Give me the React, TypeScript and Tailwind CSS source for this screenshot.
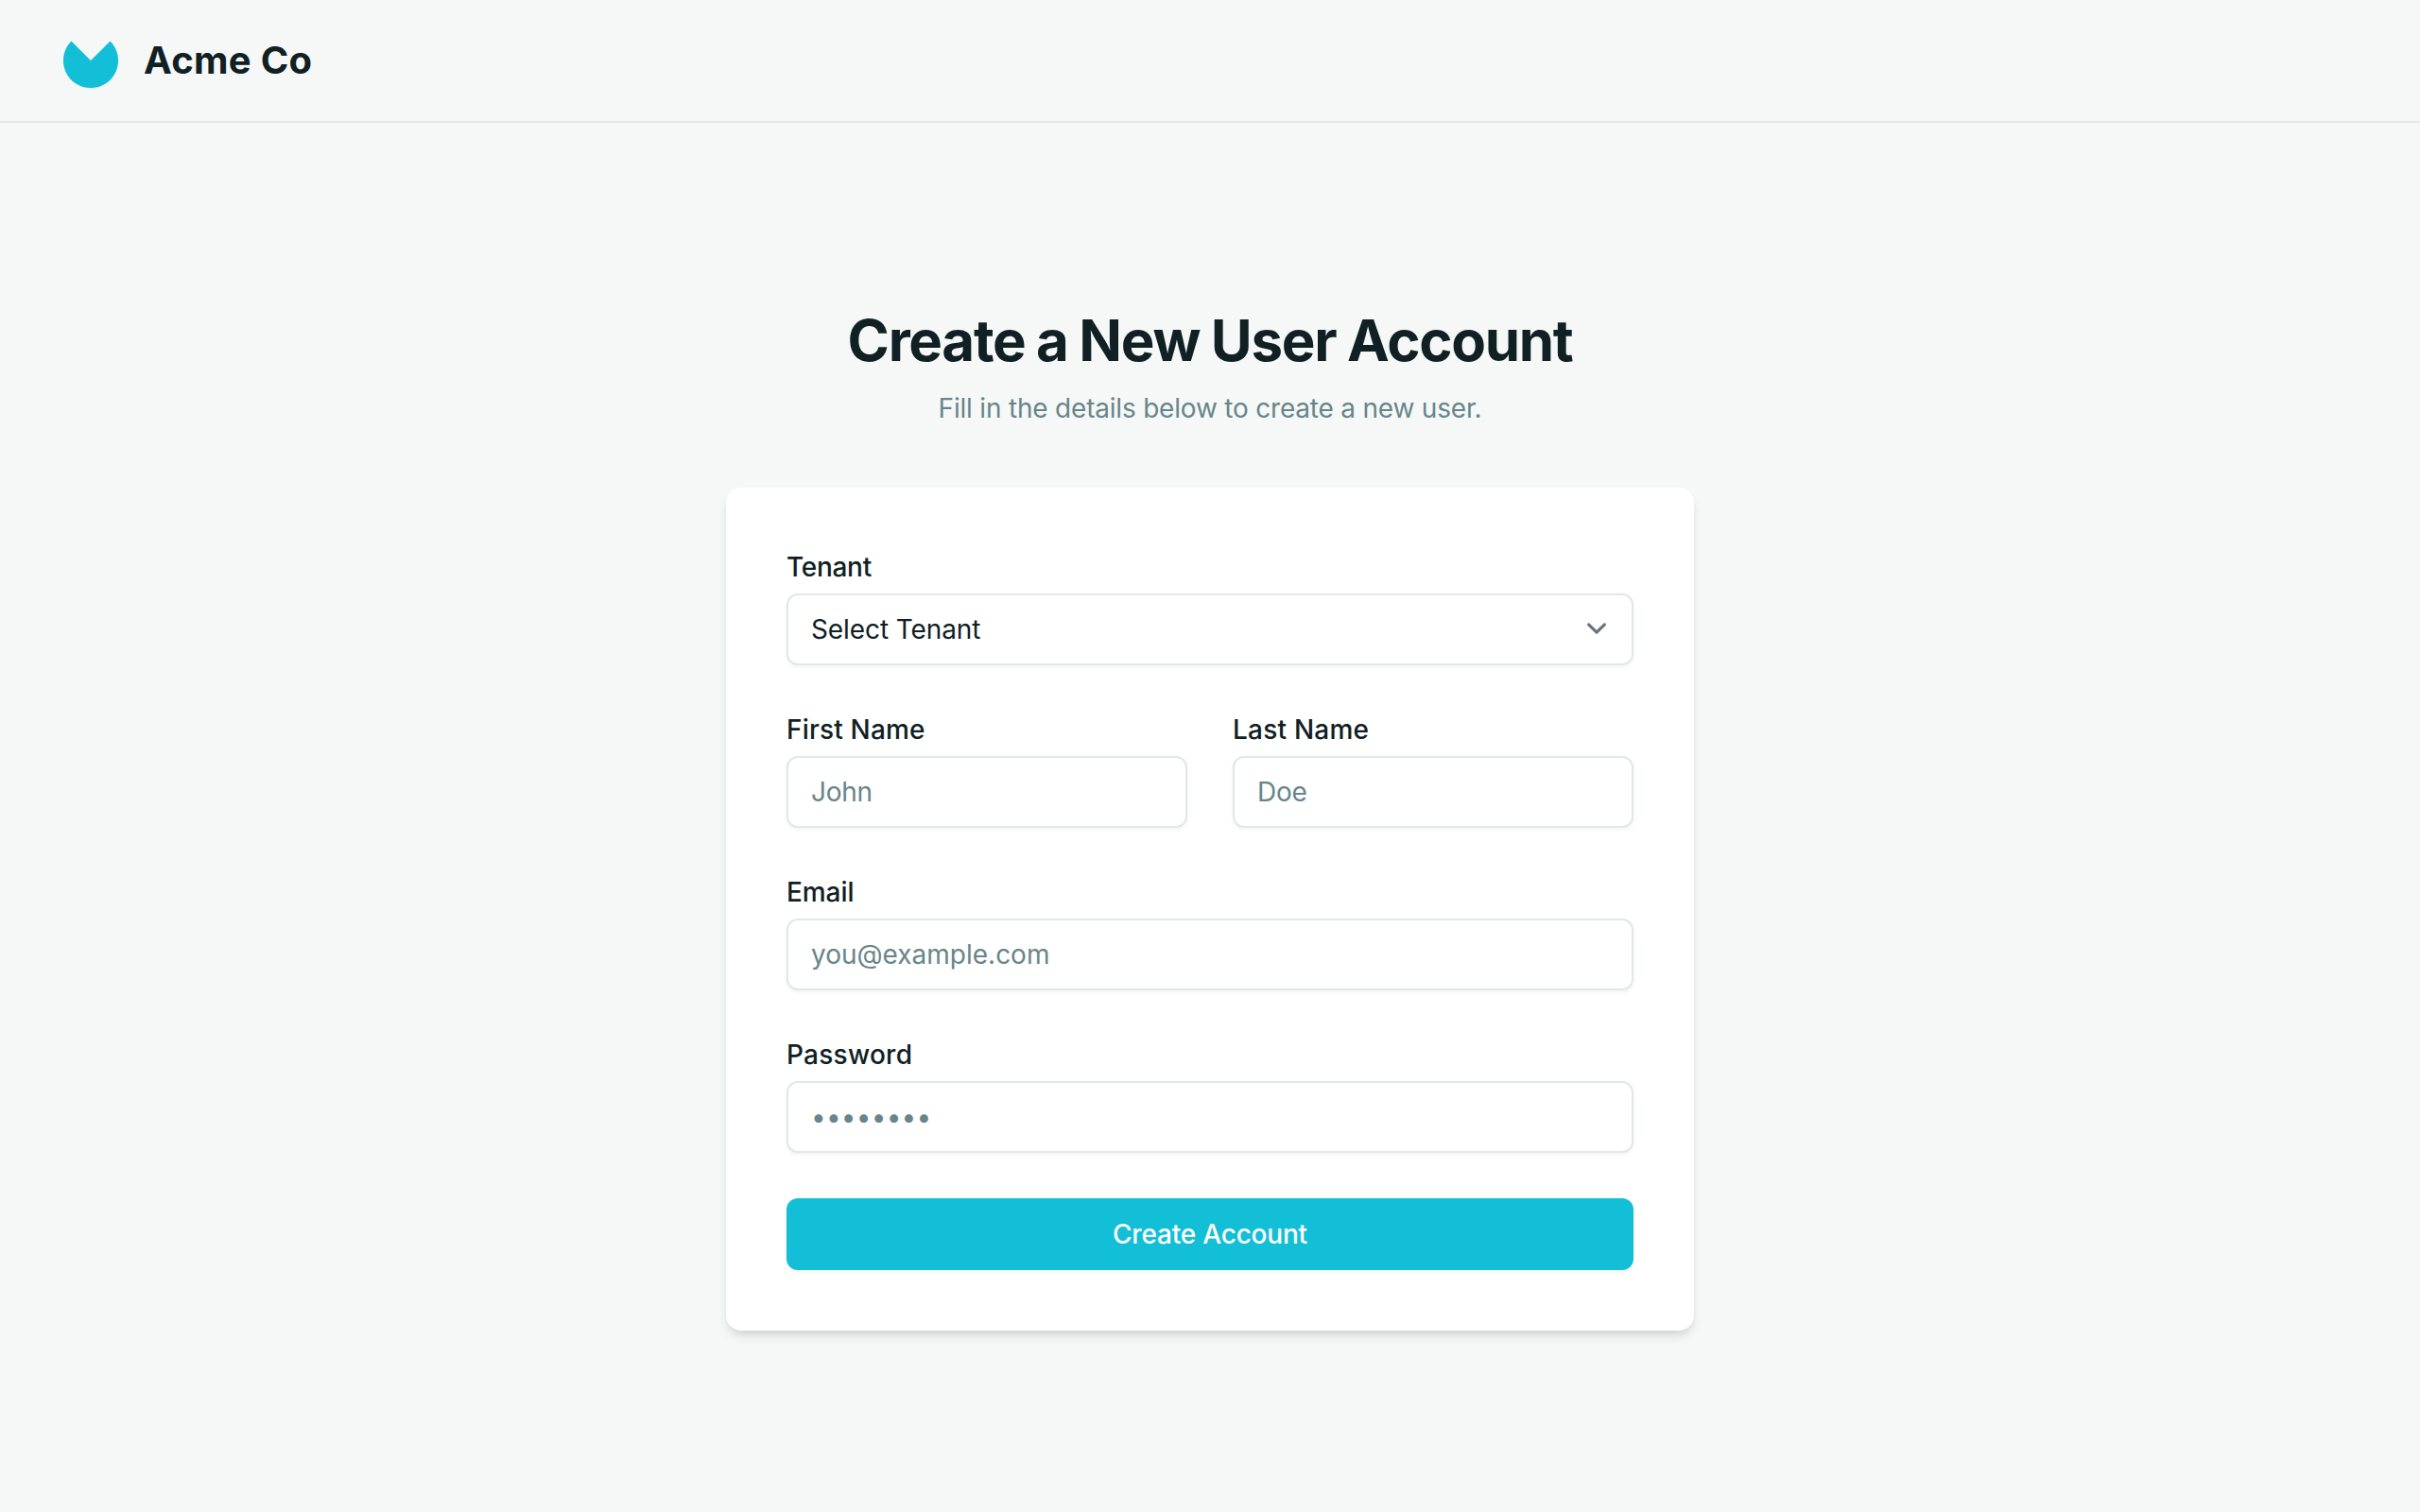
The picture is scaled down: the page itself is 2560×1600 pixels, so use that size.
import React from "react";

const field =
  "block h-[38px] w-full rounded-md border border-[#e2e8e7] bg-white px-3 py-2 text-sm shadow-[0_1px_2px_0_rgba(0,0,0,0.05)] outline-none placeholder:text-[#688589] placeholder:opacity-100";

type FieldProps = {
  label: string;
  placeholder: string;
  type?: string;
  labelTracking: string;
  inputTracking: string;
};

function Label({ tracking, children }: { tracking: string; children: React.ReactNode }) {
  return <span className={`mb-1 block text-sm font-medium ${tracking}`}>{children}</span>;
}

function Field({ label, placeholder, type = "text", labelTracking, inputTracking }: FieldProps) {
  return (
    <label className="block">
      <Label tracking={labelTracking}>{label}</Label>
      <input type={type} placeholder={placeholder} className={`${field} ${inputTracking}`} />
    </label>
  );
}

function TenantSelect() {
  return (
    <label className="block">
      <Label tracking="tracking-[-0.15px]">Tenant</Label>
      <div className="relative">
        <select className={`${field} appearance-none pr-10 tracking-[-0.05px]`}>
          <option>Select Tenant</option>
        </select>
        <svg
          viewBox="0 0 20 20"
          className="pointer-events-none absolute top-2 right-[9px] size-[21px]"
          fill="none"
          stroke="#6b7280"
          strokeWidth="1.5"
          strokeLinecap="round"
          strokeLinejoin="round"
        >
          <path d="m6 8 4 4 4-4" />
        </svg>
      </div>
    </label>
  );
}

function Logo() {
  return (
    <svg viewBox="0 0 48 48" className="size-8" fill="#13bed7">
      <path d="M8.578 8.578C5.528 11.628 3.451 15.515 2.609 19.745C1.768 23.976 2.2 28.361 3.851 32.346C5.501 36.331 8.297 39.738 11.883 42.134C15.47 44.531 19.687 45.81 24 45.81C28.314 45.81 32.53 44.531 36.117 42.134C39.703 39.738 42.499 36.331 44.149 32.346C45.8 28.361 46.232 23.976 45.391 19.745C44.549 15.515 42.472 11.628 39.422 8.578L24 24L8.578 8.578Z" />
    </svg>
  );
}

export default function App() {
  return (
    <div className="h-[1600px] w-[2560px] overflow-hidden">
      <div className="flex h-[800px] w-[1280px] origin-top-left scale-200 flex-col bg-[#f6f8f8] font-['Inter',sans-serif] text-[#102023]">
        <header className="flex h-[65px] items-center gap-3 border-b border-[#e2e8e7] px-8">
          <Logo />
          <span className="text-xl font-bold tracking-[0.14px]">Acme Co</span>
        </header>
        <main className="flex flex-1 flex-col items-center justify-center">
          <h1 className="text-3xl font-bold tracking-[-0.65px] [word-spacing:-0.6px]">Create a New User Account</h1>
          <p className="mt-2 text-sm tracking-[-0.1px] text-[#688589]">
            Fill in the details below to create a new user.
          </p>
          <form className="mt-8 flex w-lg flex-col gap-6 rounded-lg bg-white p-8 shadow-md">
            <TenantSelect />
            <div className="grid grid-cols-2 gap-6">
              <Field
                label="First Name"
                placeholder="John"
                labelTracking="tracking-[0.09px]"
                inputTracking="tracking-[-0.15px]"
              />
              <Field
                label="Last Name"
                placeholder="Doe"
                labelTracking="tracking-[0.11px]"
                inputTracking="tracking-[-0.15px]"
              />
            </div>
            <Field
              label="Email"
              placeholder="you@example.com"
              labelTracking="tracking-[-0.04px]"
              inputTracking="tracking-normal"
            />
            <Field
              label="Password"
              placeholder="••••••••"
              type="password"
              labelTracking="tracking-[0.13px]"
              inputTracking="tracking-[0.09px]"
            />
            <button
              type="button"
              className="h-[38px] rounded-md bg-[#13bed7] text-sm font-medium tracking-[-0.1px] text-white shadow-[0_1px_2px_0_rgba(0,0,0,0.05)]"
            >
              Create Account
            </button>
          </form>
        </main>
      </div>
    </div>
  );
}
